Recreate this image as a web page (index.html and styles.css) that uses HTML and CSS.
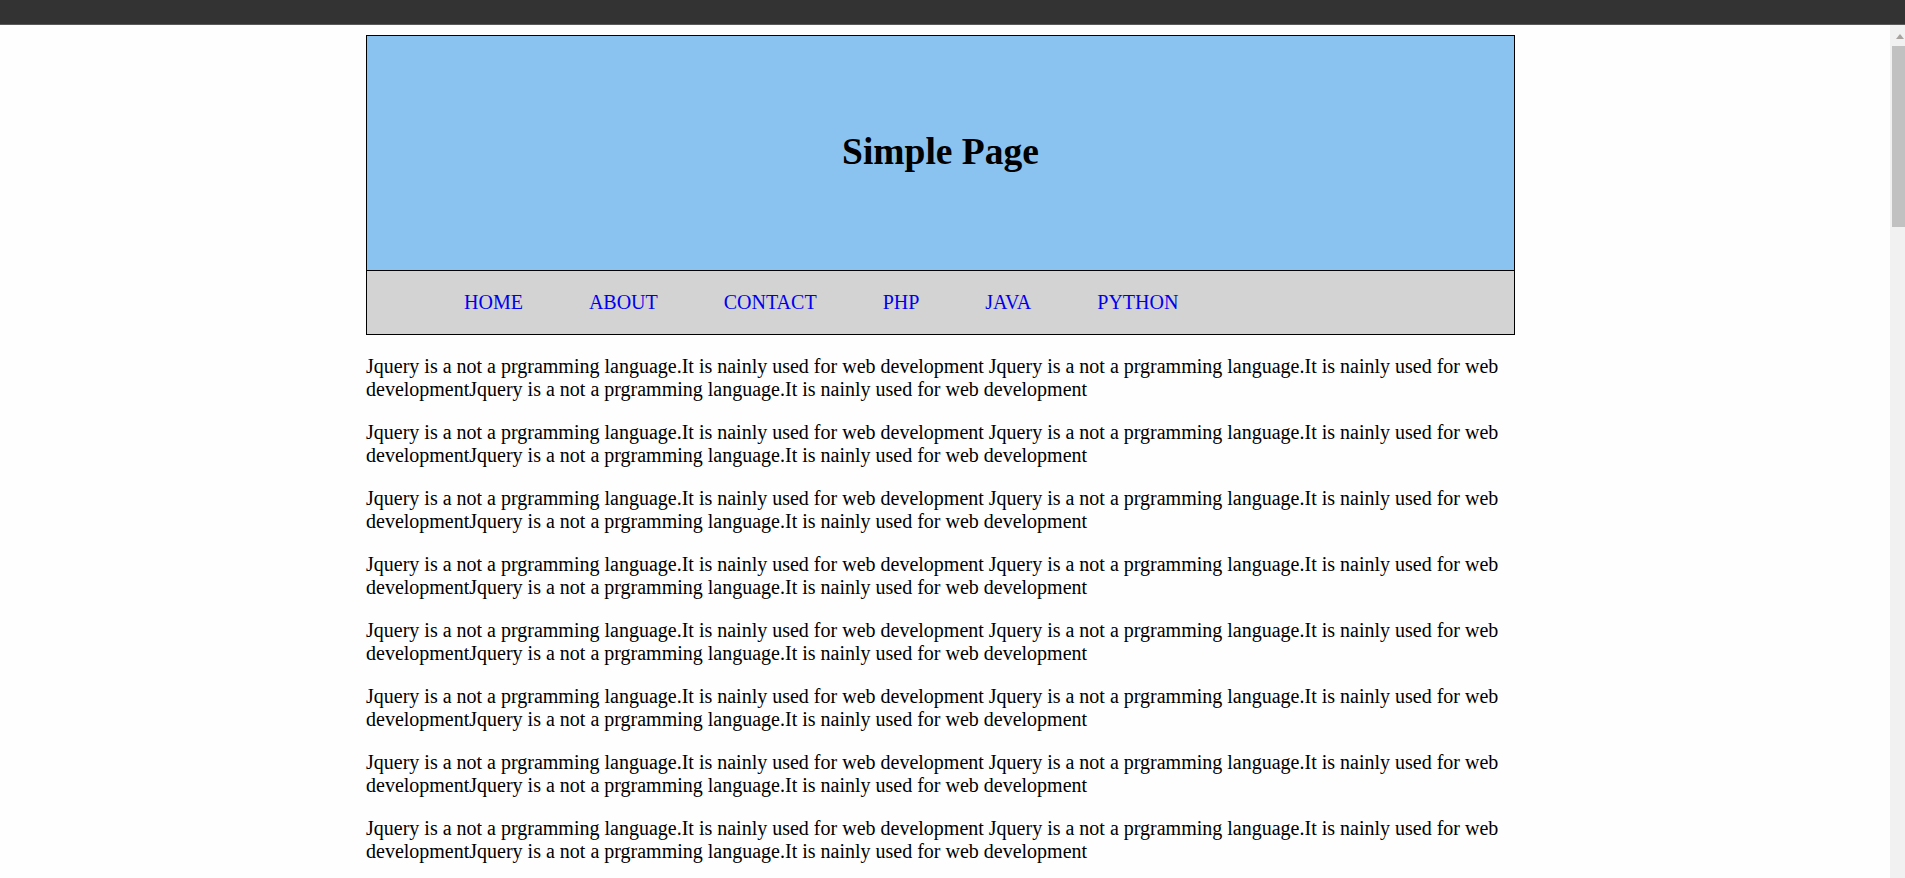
FILE: index.html
```html
<!DOCTYPE html>
<html lang="en">
<head>
<meta charset="utf-8">
<title>Simple Page</title>
<link rel="stylesheet" href="styles.css">
</head>
<body>
<div class="topbar"></div>
<div class="viewport">
  <div class="page">
    <div class="wrapper">
      <div class="header">
        <div class="banner"><h1>Simple Page</h1></div>
        <ul class="nav">
          <li><a href="#">HOME</a></li>
          <li><a href="#">ABOUT</a></li>
          <li><a href="#">CONTACT</a></li>
          <li><a href="#">PHP</a></li>
          <li><a href="#">JAVA</a></li>
          <li><a href="#">PYTHON</a></li>
        </ul>
      </div>
      <p>Jquery is a not a prgramming language.It is nainly used for web development Jquery is a not a prgramming language.It is nainly used for web developmentJquery is a not a prgramming language.It is nainly used for web development</p>
      <p>Jquery is a not a prgramming language.It is nainly used for web development Jquery is a not a prgramming language.It is nainly used for web developmentJquery is a not a prgramming language.It is nainly used for web development</p>
      <p>Jquery is a not a prgramming language.It is nainly used for web development Jquery is a not a prgramming language.It is nainly used for web developmentJquery is a not a prgramming language.It is nainly used for web development</p>
      <p>Jquery is a not a prgramming language.It is nainly used for web development Jquery is a not a prgramming language.It is nainly used for web developmentJquery is a not a prgramming language.It is nainly used for web development</p>
      <p>Jquery is a not a prgramming language.It is nainly used for web development Jquery is a not a prgramming language.It is nainly used for web developmentJquery is a not a prgramming language.It is nainly used for web development</p>
      <p>Jquery is a not a prgramming language.It is nainly used for web development Jquery is a not a prgramming language.It is nainly used for web developmentJquery is a not a prgramming language.It is nainly used for web development</p>
      <p>Jquery is a not a prgramming language.It is nainly used for web development Jquery is a not a prgramming language.It is nainly used for web developmentJquery is a not a prgramming language.It is nainly used for web development</p>
      <p>Jquery is a not a prgramming language.It is nainly used for web development Jquery is a not a prgramming language.It is nainly used for web developmentJquery is a not a prgramming language.It is nainly used for web development</p>
    </div>
  </div>
  <div class="scrollbar">
    <div class="scroll-up"></div>
    <div class="scroll-thumb"></div>
  </div>
</div>
</body>
</html>
```

FILE: styles.css
```css
html, body {
  margin: 0;
  padding: 0;
  height: 878px;
  overflow: hidden;
}

body {
  background: #fefefe;
  font-family: "Liberation Serif", "Times New Roman", serif;
  color: #000;
}

.topbar {
  height: 24px;
  background: #333333;
  border-bottom: 1px solid #5a5a5a;
}

.viewport {
  display: flex;
  height: 853px;
}

.page {
  flex: 1;
  overflow: hidden;
  padding-top: 10px;
}

.wrapper {
  width: 1149px;
  margin-left: 366px;
}

.header {
  border: 1px solid #000;
}

.banner {
  background: #8bc3f0;
  border-bottom: 1px solid #000;
  padding: 94px 0 97px;
  text-align: center;
}

.banner h1 {
  margin: 0;
  font-size: 37.5px;
  font-weight: bold;
  line-height: 43px;
}

.nav {
  display: flex;
  gap: 66px;
  list-style: none;
  margin: 0;
  padding: 20px 0 20px 97px;
  background: #d3d3d3;
  font-size: 20px;
}

.nav a {
  color: #0000ee;
  text-decoration: none;
}

.wrapper p {
  font-size: 20px;
  margin: 20px 0;
}

.scrollbar {
  width: 15px;
  background: #f1f1f1;
  display: flex;
  flex-direction: column;
  padding-top: 9px;
}

.scroll-up {
  width: 0;
  height: 0;
  margin-left: 6px;
  border-left: 4px solid transparent;
  border-right: 4px solid transparent;
  border-bottom: 5px solid #a8a29e;
}

.scroll-thumb {
  margin-top: 7px;
  margin-left: 2px;
  width: 13px;
  height: 181px;
  background: #c1c1c1;
}
```
